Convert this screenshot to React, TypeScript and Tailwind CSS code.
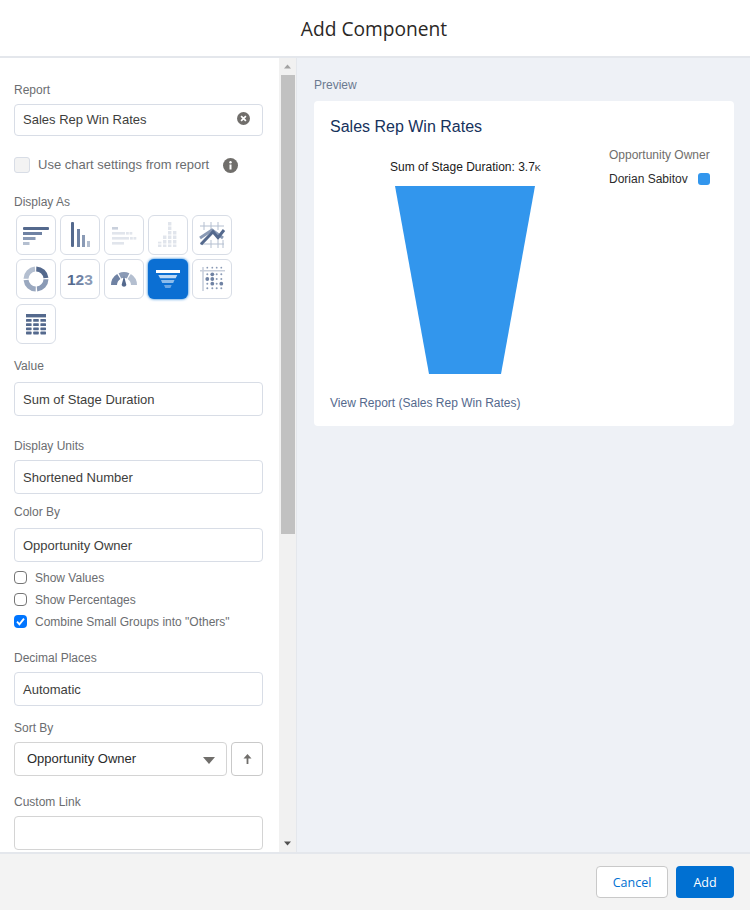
import type { ReactNode } from "react";

function Label({ children, className = "" }: { children: ReactNode; className?: string }) {
  return <div className={`text-xs leading-[16px] text-[#6b6d70] ${className}`}>{children}</div>;
}

function TextBox({ value, className = "" }: { value?: string; className?: string }) {
  return (
    <div className={`flex h-[34px] items-center rounded border bg-white px-2 pt-0.5 text-[13px] text-[#3e3e3c] ${className}`}>
      {value}
    </div>
  );
}

function Check({ label, checked = false, className = "" }: { label: string; checked?: boolean; className?: string }) {
  return (
    <div className={`flex h-4 items-center text-xs text-[#6b6d70] ${className}`}>
      {checked ? (
        <span className="mr-2 flex size-[13px] items-center justify-center rounded-sm bg-[#0075ff]">
          <svg viewBox="0 0 12 12" className="size-[11px]">
            <path d="M2.2 6.2 4.8 9 9.8 2.8" fill="none" stroke="#fff" strokeWidth="2" />
          </svg>
        </span>
      ) : (
        <span className="mr-2 size-[13px] rounded-sm border border-[#767676] bg-white" />
      )}
      {label}
    </div>
  );
}

const dark = "#54698d";
const midDark = "#6f82a3";
const mid = "#8a9ab5";
const soft = "#b4bfd0";
const pale = "#c9d0dc";
const faint = "#e1e5ec";

// coordinates inside a tile are measured from the tile's outer corner, border included
function Tile({ children, active = false }: { children: ReactNode; active?: boolean }) {
  if (active) {
    return (
      <div className="size-10 rounded-md bg-[#0b6fd3] shadow-[0_0_3px_#0070d2]">
        <svg viewBox="0 0 40 40" className="size-10">
          {children}
        </svg>
      </div>
    );
  }
  return (
    <div className="size-10 rounded-md border border-[#d8dde6] bg-white">
      <svg viewBox="1 1 38 38" className="size-[38px]">
        {children}
      </svg>
    </div>
  );
}

function Arc({ rotate, color }: { rotate: number; color: string }) {
  return (
    <circle
      cx="20"
      cy="20"
      r="10"
      fill="none"
      stroke={color}
      strokeWidth="5"
      strokeDasharray="14.3 48.5"
      transform={`rotate(${rotate} 20 20)`}
    />
  );
}

function Blocks({ y, xs, fill }: { y: number; xs: number[]; fill: string }) {
  return (
    <>
      {xs.map((x) => (
        <rect key={x} x={x} y={y} width="2.8" height="2.6" fill={fill} />
      ))}
    </>
  );
}

function ChartTiles() {
  return (
    <div className="mt-[5px] grid w-[220px] grid-cols-[repeat(5,40px)] gap-x-1 gap-y-[4.3px] pl-0.5">
      <Tile>
        <rect x="7" y="12" width="26" height="3" fill={dark} rx="1" />
        <rect x="7" y="17" width="19" height="3" fill={midDark} />
        <rect x="7" y="22" width="12.5" height="3" fill={mid} />
        <rect x="7" y="27" width="6.5" height="3" fill={soft} />
      </Tile>
      <Tile>
        <rect x="11" y="7" width="3" height="25" fill={dark} rx="1" />
        <rect x="17" y="14" width="3" height="18" fill={midDark} />
        <rect x="22" y="20" width="3" height="12" fill={mid} />
        <rect x="27" y="26" width="3" height="6" fill={soft} />
      </Tile>
      <Tile>
        <rect x="8" y="12" width="6" height="2.6" fill={pale} />
        <rect x="8" y="17" width="13" height="2.6" fill={faint} />
        <Blocks y={17} xs={[22, 25.5]} fill={faint} />
        <rect x="8" y="22" width="17" height="2.6" fill={faint} />
        <Blocks y={22} xs={[26, 29.5]} fill={faint} />
        <rect x="8" y="27" width="12" height="2.6" fill={faint} />
      </Tile>
      <Tile>
        <rect x="10" y="26.7" width="3.4" height="5.3" fill={faint} />
        <rect x="15" y="20" width="3.4" height="12" fill={faint} />
        <rect x="20" y="7" width="3.4" height="25" fill={faint} />
        <rect x="25" y="15" width="3.4" height="17" fill={faint} />
        <path d="M9 29h21M9 24.5h21M9 20h21M9 15.5h21M9 11h21" stroke="#fff" strokeWidth="1" />
      </Tile>
      <Tile>
        <path d="M8 11h24M8 29h24M12 7v8M19 7v8M26 7v8M19 25v8M26 25v8M31 25v8" stroke={soft} strokeWidth="1" fill="none" />
        <path d="M8 23 20 15l11 8" stroke={mid} strokeWidth="3" fill="none" />
        <path d="M9 29.3 21 16.7l5 6 6-7.7" stroke={dark} strokeWidth="3" fill="none" />
      </Tile>
      <Tile>
        <Arc rotate={1.5} color={mid} />
        <Arc rotate={91.5} color="#9aa8bf" />
        <Arc rotate={181.5} color={soft} />
        <Arc rotate={271.5} color={dark} />
      </Tile>
      <Tile>
        <g fontSize="15.5" fontWeight="700" fontFamily="'Liberation Sans', sans-serif">
          <text x="7" y="26" fill={dark}>
            1
          </text>
          <text x="15.6" y="26" fill={midDark}>
            2
          </text>
          <text x="24.2" y="26" fill={mid}>
            3
          </text>
        </g>
      </Tile>
      <Tile>
        <path d="M7 26a13 13 0 0 1 6.2-11l3.2 5a7.5 7.5 0 0 0-3.4 6z" fill={midDark} />
        <path d="M14.6 14.2a13 13 0 0 1 10.8 0l-2.6 5.2a7.5 7.5 0 0 0-5.6 0z" fill={mid} />
        <path d="M26.8 15a13 13 0 0 1 6.2 11h-6a7.5 7.5 0 0 0-3.4-6z" fill={soft} />
        <path d="M20 17 22.4 26a2.5 2.5 0 0 1-4.8 0z" fill={dark} />
      </Tile>
      <Tile active>
        <rect x="8" y="11" width="24" height="3" fill="#fff" />
        <path d="M10.3 16h19l-1.6 3.3H12z" fill="#bcd8f5" />
        <path d="M13 21h13.5l-1.3 3H14.2z" fill="#8cbcec" />
        <path d="M16 26h7.7l-1.3 3h-5.1z" fill="#6aa6e4" />
      </Tile>
      <Tile>
        <path d="M8 11.7h25M11 8v24" stroke={pale} strokeWidth="1.6" fill="none" />
        {[15.3, 20, 24.7, 29.3].map((y) =>
          [15.3, 20.3, 24.7, 29.3].map((x) => {
            const big = (x === 20.3 && y < 25) || (x === 15.3 && y === 20) || (x === 29.3 && y === 24.7);
            return <circle key={`${x}-${y}`} cx={x} cy={y} r={big ? 1.9 : 1} fill={big ? midDark : mid} />;
          }),
        )}
        {[15.3, 20.3, 24.7, 29.3].map((x) => (
          <circle key={x} cx={x} cy="8.7" r="0.9" fill={mid} />
        ))}
      </Tile>
      <Tile>
        <rect x="10" y="10" width="20" height="3.4" fill={dark} />
        {[15, 19.2, 23.4, 27.6].map((y) => (
          <g key={y} fill={dark}>
            <rect x="10" y={y} width="5.6" height="2.8" rx="0.6" />
            <rect x="17.2" y={y} width="5.6" height="2.8" rx="0.6" />
            <rect x="24.4" y={y} width="5.6" height="2.8" rx="0.6" />
          </g>
        ))}
      </Tile>
    </div>
  );
}

function ScrollBar() {
  return (
    <div className="flex w-[17px] shrink-0 flex-col items-center bg-[#f1f1f1]">
      <svg viewBox="0 0 17 17" className="size-[17px] shrink-0">
        <path d="M5 10.5 8.5 6.5l3.5 4z" fill="#a3a3a3" />
      </svg>
      <div className="ml-px h-[459px] w-[14px] shrink-0 bg-[#c1c1c1]" />
      <div className="flex-1" />
      <svg viewBox="0 0 17 17" className="size-[17px] shrink-0">
        <path d="M5 6.5h7l-3.5 4z" fill="#505050" />
      </svg>
    </div>
  );
}

function SettingsPanel() {
  return (
    <div className="flex w-[297px] shrink-0 border-r border-[#e4e7ec] bg-white">
      <div className="h-full w-[279px] shrink-0 overflow-hidden bg-white pt-[24px] pr-4 pl-3.5">
        <Label>Report</Label>
        <div className="mt-1.5 flex h-8 items-center justify-between rounded border border-[#d8dde6] bg-white pr-3 pl-2 text-[13px] text-[#3e3e3c]">
          Sales Rep Win Rates
          <svg viewBox="0 0 14 14" className="mb-[3px] size-[13px]">
            <circle cx="7" cy="7" r="7" fill="#706e6b" />
            <path d="m4.4 4.4 5.2 5.2m0-5.2-5.2 5.2" stroke="#fff" strokeWidth="1.8" />
          </svg>
        </div>
        <div className="mt-[21px] flex h-4 items-center text-[13px] text-[#6b6d70]">
          <span className="mr-2 size-4 rounded-[3px] border border-[#d8dde6] bg-[#f3f3f3]" />
          Use chart settings from report
          <svg viewBox="0 0 15 15" className="ml-[14px] size-[15px]">
            <circle cx="7.5" cy="7.5" r="7.5" fill="#706e6b" />
            <rect x="6.5" y="6.5" width="2" height="5" fill="#fff" />
            <circle cx="7.5" cy="4.3" r="1.2" fill="#fff" />
          </svg>
        </div>
        <Label className="mt-[21px]">Display As</Label>
        <ChartTiles />
        <Label className="mt-[14.4px]">Value</Label>
        <TextBox value="Sum of Stage Duration" className="mt-2 border-[#d8dde6]" />
        <Label className="mt-[22px]">Display Units</Label>
        <TextBox value="Shortened Number" className="mt-1.5 border-[#d8dde6]" />
        <Label className="mt-2.5">Color By</Label>
        <TextBox value="Opportunity Owner" className="mt-2 border-[#d8dde6]" />
        <Check label="Show Values" className="mt-2" />
        <Check label="Show Percentages" className="mt-1.5" />
        <Check label={'Combine Small Groups into "Others"'} checked className="mt-1.5" />
        <Label className="mt-5">Decimal Places</Label>
        <TextBox value="Automatic" className="mt-1.5 border-[#d8dde6]" />
        <Label className="mt-3.5">Sort By</Label>
        <div className="mt-1.5 flex gap-1">
          <div className="flex h-[34px] w-[213px] items-center justify-between rounded border border-[#d4d4d4] bg-white pr-[11px] pl-3 text-[13px] text-[#2b2b2b]">
            Opportunity Owner
            <svg viewBox="0 0 12 7" className="mt-1 h-[7px] w-3">
              <path d="M0 0h12L6 7z" fill="#706e6b" />
            </svg>
          </div>
          <div className="flex h-[34px] w-8 items-center justify-center rounded border border-[#c9c9c9] bg-white">
            <svg viewBox="0 0 9 10" className="h-2.5 w-[9px]">
              <path d="M4.5 0 8.5 4.5H5.4V10H3.6V4.5H.5z" fill="#706e6b" />
            </svg>
          </div>
        </div>
        <Label className="mt-[18px]">Custom Link</Label>
        <TextBox className="mt-1.5 border-[#d4d4d4]" />
      </div>
      <ScrollBar />
    </div>
  );
}

function PreviewCard() {
  return (
    <div className="h-[325px] rounded bg-white pt-4 pr-6 pb-4 pl-4">
      <div className="text-base leading-5 text-[#16325c]">Sales Rep Win Rates</div>
      <div className="flex">
        <div className="w-[279px]">
          <div className="mt-[22px] h-4 pr-2 text-center text-xs leading-4 text-[#1a1a1a]">
            Sum of Stage Duration: 3.7<span className="text-[9px]">K</span>
          </div>
          <svg viewBox="0 0 140 188" className="mt-[11px] ml-[65px] h-[188px] w-[140px]">
            <path d="M0 0h140l-34 188H34z" fill="#3296ed" />
          </svg>
        </div>
        <div className="w-[101px] pt-2.5">
          <div className="text-xs leading-4 text-[#706e6b]">Opportunity Owner</div>
          <div className="mt-2 flex h-4 items-center justify-between text-xs text-[#2b2b2b]">
            Dorian Sabitov
            <span className="size-3 rounded-[3px] bg-[#3296ed]" />
          </div>
        </div>
      </div>
      <div className="mt-[21px] text-xs leading-4 text-[#54698d]">View Report (Sales Rep Win Rates)</div>
    </div>
  );
}

export default function App() {
  return (
    <div className="flex h-[910px] w-[750px] flex-col overflow-hidden bg-white font-['Liberation_Sans',Arial,sans-serif]">
      <header className="flex h-[58px] shrink-0 items-center justify-center border-b-2 border-[#e4e7ec] bg-white pt-[3px] pr-0.5 font-['Open_Sans',sans-serif] text-[19.2px] text-[#2b2826]">
        Add Component
      </header>
      <div className="flex min-h-0 flex-1">
        <SettingsPanel />
        <main className="flex-1 bg-[#eef1f6] pt-[19px] pr-4 pl-[17px]">
          <div className="text-xs leading-4 text-[#6b7a90]">Preview</div>
          <div className="mt-[8px]">
            <PreviewCard />
          </div>
        </main>
      </div>
      <footer className="flex h-[58px] shrink-0 items-center justify-end gap-2 border-t-2 border-[#e4e7ec] bg-[#f3f3f3] pr-4 font-['Open_Sans',sans-serif]">
        <button className="h-8 w-[72px] rounded border border-[#c9c9c9] bg-white pt-[3px] text-[12.5px] text-[#0070d2]">Cancel</button>
        <button className="h-8 w-[58px] rounded bg-[#0070d2] pt-[3px] text-[12.5px] text-white">Add</button>
      </footer>
    </div>
  );
}
